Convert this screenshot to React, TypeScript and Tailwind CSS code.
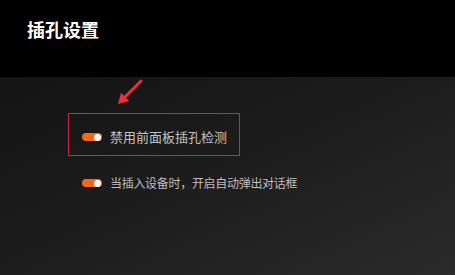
import React from "react";

function Toggle() {
  return (
    <div className="relative w-[20px] h-[8px] rounded-full bg-[#f4681a] shrink-0">
      <div className="absolute right-[1px] top-[0.5px] w-[7px] h-[7px] rounded-full bg-white" />
    </div>
  );
}

export default function App() {
  return (
    <div
      className="w-[455px] h-[275px] flex flex-col overflow-hidden"
      style={{ fontFamily: '"Microsoft YaHei", "Noto Sans CJK SC", sans-serif' }}
    >
      <div className="h-[77px] bg-black pl-[27px] pt-[16px] shrink-0">
        <div className="text-[18px] leading-[26px] font-bold text-white">插孔设置</div>
      </div>
      <div className="relative flex-1 bg-linear-to-br from-[#141414] via-[#1d1d1d] to-[#2b2b2b] pl-[68px] pt-[36px]">
        <svg
          className="absolute left-[110px] top-[0px]"
          width="36"
          height="34"
          viewBox="0 0 36 34"
        >
          <g transform="translate(-110,-77)">
            <line x1="141" y1="81" x2="124" y2="98" stroke="#ee2f3b" strokeWidth="3" strokeLinecap="round" />
            <polygon points="118,104 129.2,101 121,92.8" fill="#ee2f3b" />
          </g>
        </svg>
        <div className="w-[172px] h-[43px] border border-[#cc2a3e] flex items-center pl-[13px] pt-[5px] gap-[8px]">
          <Toggle />
          <span className="text-[13px] leading-[18px] text-[#c2c2c2] whitespace-nowrap">禁用前面板插孔检测</span>
        </div>
        <div className="mt-[18px] flex items-center pl-[14px] gap-[8px]">
          <Toggle />
          <span className="text-[12px] leading-[18px] text-[#bdbdbd] whitespace-nowrap tracking-[-0.3px]">当插入设备时，开启自动弹出对话框</span>
        </div>
      </div>
    </div>
  );
}
